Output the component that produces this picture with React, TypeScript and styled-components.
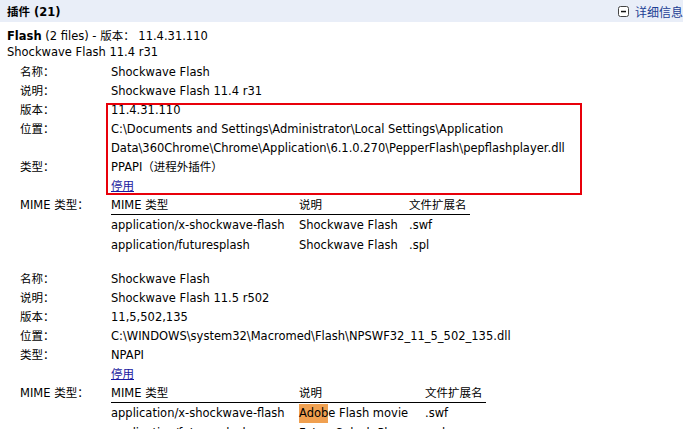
import styled, { createGlobalStyle } from 'styled-components'

const GlobalStyle = createGlobalStyle`
  html, body {
    margin: 0;
    padding: 0;
    background: #fff;
    overflow: hidden;
  }
  body {
    font-family: "DejaVu Sans", "Noto Sans CJK SC", sans-serif;
    font-size: 11.5px;
    color: #000;
  }
`

type MimeRow = { type: string; desc: string; ext: string; mark?: string }

type Plugin = {
  name: string;
  desc: string;
  version: string;
  location: string[];
  kind: string;
  mimes: MimeRow[];
  cols: number[];
  boxed?: boolean;
}

const plugins: Plugin[] = [
  {
    name: 'Shockwave Flash',
    desc: 'Shockwave Flash 11.4 r31',
    version: '11.4.31.110',
    location: [
      'C:\\Documents and Settings\\Administrator\\Local Settings\\Application',
      'Data\\360Chrome\\Chrome\\Application\\6.1.0.270\\PepperFlash\\pepflashplayer.dll',
    ],
    kind: 'PPAPI（进程外插件）',
    cols: [188, 110, 61],
    boxed: true,
    mimes: [
      { type: 'application/x-shockwave-flash', desc: 'Shockwave Flash', ext: '.swf' },
      { type: 'application/futuresplash', desc: 'Shockwave Flash', ext: '.spl' },
    ],
  },
  {
    name: 'Shockwave Flash',
    desc: 'Shockwave Flash 11.5 r502',
    version: '11,5,502,135',
    location: ['C:\\WINDOWS\\system32\\Macromed\\Flash\\NPSWF32_11_5_502_135.dll'],
    kind: 'NPAPI',
    cols: [188, 126, 61],
    mimes: [
      { type: 'application/x-shockwave-flash', desc: 'e Flash movie', mark: 'Adob', ext: '.swf' },
      { type: 'application/futuresplash', desc: 'FutureSplash Player', ext: '.spl' },
    ],
  },
]

export default function App() {
  return (
    <Page>
      <GlobalStyle />
      <HeaderBar>
        <Title>插件 (21)</Title>
        <Toggle>
          <MinusBox>
            <svg width="11" height="11" viewBox="0 0 11 11">
              <rect x="0.5" y="0.5" width="10" height="10" rx="2" fill="#fff" stroke="#444" />
              <rect x="3" y="4.8" width="5" height="1.5" fill="#111" />
            </svg>
          </MinusBox>
          详细信息
        </Toggle>
      </HeaderBar>
      <Content>
        <PluginHead>
          <b>Flash</b> (2 files) - 版本： 11.4.31.110
        </PluginHead>
        <SubHead>Shockwave Flash 11.4 r31</SubHead>
        {plugins.map((p, i) => (
          <Block key={i} $first={i === 0}>
            {p.boxed && <RedBox />}
            <Label>名称：</Label>
            <Value>{p.name}</Value>
            <Label>说明：</Label>
            <Value>{p.desc}</Value>
            <Label>版本：</Label>
            <Value>{p.version}</Value>
            <Label>位置：</Label>
            <Value>
              {p.location.map((l) => (
                <div key={l}>{l}</div>
              ))}
            </Value>
            <Label>类型：</Label>
            <Value>{p.kind}</Value>
            <Label />
            <Value>
              <Disable href="#">停用</Disable>
            </Value>
            <Label>MIME 类型：</Label>
            <Value>
              <MimeTable>
                <thead>
                  <tr>
                    <Th $w={p.cols[0]}>MIME 类型</Th>
                    <Th $w={p.cols[1]}>说明</Th>
                    <Th $w={p.cols[2]}>文件扩展名</Th>
                  </tr>
                </thead>
                <tbody>
                  {p.mimes.map((m) => (
                    <tr key={m.type}>
                      <Td>{m.type}</Td>
                      <Td>
                        {m.mark && <Mark>{m.mark}</Mark>}
                        {m.desc}
                      </Td>
                      <Td>{m.ext}</Td>
                    </tr>
                  ))}
                </tbody>
              </MimeTable>
            </Value>
          </Block>
        ))}
      </Content>
    </Page>
  )
}

const Page = styled.div`
  width: 700px;
`

const HeaderBar = styled.div`
  display: flex;
  align-items: center;
  justify-content: space-between;
  height: 22px;
  padding: 0 0 0 7px;
  background: #e9eef8;
`

const Title = styled.div`
  font-weight: bold;
  font-size: 11.5px;
`

const Toggle = styled.div`
  display: flex;
  align-items: center;
  gap: 6px;
  width: 82px;
  color: #1c3f94;
  font-size: 12px;
  white-space: nowrap;
`

const MinusBox = styled.span`
  display: flex;
`

const Content = styled.div`
  padding: 6px 0 0 7px;
`

const PluginHead = styled.div`
  line-height: 16px;
  b {
    font-weight: bold;
  }
`

const SubHead = styled.div`
  line-height: 16px;
`

const Block = styled.div<{ $first: boolean }>`
  position: relative;
  display: grid;
  grid-template-columns: 91px auto;
  padding-left: 13px;
  margin-top: ${(p) => (p.$first ? '3px' : '15px')};
  line-height: 19px;
`

const RedBox = styled.div`
  position: absolute;
  left: 99px;
  top: 40px;
  width: 472px;
  height: 88px;
  border: 2px solid #e8000a;
  pointer-events: none;
`

const Label = styled.div`
  white-space: nowrap;
`

const Value = styled.div`
  white-space: nowrap;
`

const Disable = styled.a`
  color: #1a1aa0;
  text-decoration: underline;
`

const MimeTable = styled.table`
  border-collapse: collapse;
  line-height: 18px;
`

const Th = styled.th<{ $w: number }>`
  width: ${(p) => p.$w}px;
  padding: 0;
  text-align: left;
  font-weight: normal;
  border-bottom: 1px solid #000;
`

const Td = styled.td`
  padding: 0;
  line-height: 20px;
`

const Mark = styled.span`
  background: #f0a050;
  padding: 2px 0 3px;
`
